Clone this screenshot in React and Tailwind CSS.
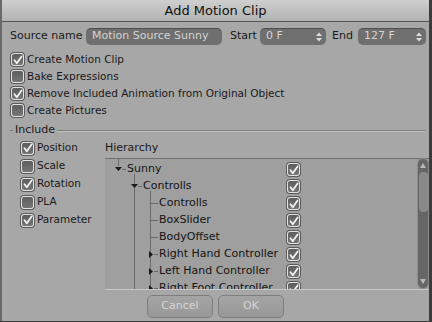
import React from 'react';

const font = { fontFamily: '"DejaVu Sans", "Liberation Sans", sans-serif' };

const Check = ({ on }) => (
  <span className="flex h-[13px] w-[13px] shrink-0 items-center justify-center rounded-[3px] border border-[#e2e2e2] bg-gradient-to-b from-[#5e5e5e] to-[#767676] shadow-[0_0_0_1px_#5a5a5a]">
    {on && (
      <svg width="10" height="10" viewBox="0 0 10 10">
        <path d="M1.5 5.2 L3.8 8.2 L8.6 1.4" stroke="#f2f2f2" strokeWidth="1.8" fill="none" strokeLinecap="round" strokeLinejoin="round" />
      </svg>
    )}
  </span>
);

const CheckRow = ({ on, label, h = 'h-[17px]' }) => (
  <div className={`flex ${h} items-center gap-[3px]`}>
    <Check on={on} />
    <span className="text-[10.5px] text-[#1a1a1a]">{label}</span>
  </div>
);

const Field = ({ value, w, spin }) => (
  <div className={`flex h-[17px] ${w} items-center justify-between rounded-[5px] border-t border-[#4e4e4e] bg-[#6f6f6f] pl-[6px] pr-[4px]`}>
    <span className="text-[11px] text-[#d4d4d4]">{value}</span>
    {spin && (
      <svg width="6" height="10" viewBox="0 0 6 10">
        <path d="M0 4 L3 0.5 L6 4 Z M0 6 L3 9.5 L6 6 Z" fill="#dcdcdc" />
      </svg>
    )}
  </div>
);

const TREE = [
  { name: 'Sunny', indent: 22 },
  { name: 'Controlls', indent: 38 },
  { name: 'Controlls', indent: 54 },
  { name: 'BoxSlider', indent: 54 },
  { name: 'BodyOffset', indent: 54 },
  { name: 'Right Hand Controller', indent: 54 },
  { name: 'Left Hand Controller', indent: 54 },
  { name: 'Right Foot Controller', indent: 54 },
];

const TreeLines = () => (
  <svg className="pointer-events-none absolute left-0 top-0" width="312" height="130">
    <g stroke="#6b6b6b" strokeWidth="1" fill="none">
      <path d="M13.5 0 V7" />
      <path d="M17 10.5 H21" />
      <path d="M29.5 15 V130" />
      <path d="M33 27.5 H37" />
      <path d="M45.5 32 V130" />
      <path d="M45.5 44.5 H53 M45.5 61.5 H53 M45.5 78.5 H53 M49 95.5 H53 M49 112.5 H53 M49 129.5 H53" />
    </g>
    <g fill="#1a1a1a">
      <path d="M10 8 L17 8 L13.5 12 Z" />
      <path d="M26 25 L33 25 L29.5 29 Z" />
      <path d="M44 92 L44 99 L48 95.5 Z M44 109 L44 116 L48 112.5 Z M44 126 L44 133 L48 129.5 Z" />
    </g>
  </svg>
);

export default function App() {
  return (
    <div style={font} className="relative h-[322px] w-[432px] overflow-hidden bg-[#3c3c3c]">
      <div className="flex h-[321px] w-[429px] flex-col border-l-2 border-[#6a6a6a] bg-[#a7a7a7]">
        <div className="flex h-[22px] shrink-0 items-center justify-center border-b border-[#555] bg-gradient-to-b from-[#cfcfcf] to-[#b2b2b2]">
          <span className="text-[13px] text-[#111]">Add Motion Clip</span>
        </div>

        <div className="flex flex-col pl-[8px] pt-[5px]">
          <div className="flex h-[18px] items-center">
            <span className="w-[76px] text-[11px] text-[#1a1a1a]">Source name</span>
            <Field value="Motion Source Sunny" w="w-[136px]" />
            <span className="ml-[8px] w-[30px] text-[11px] text-[#1a1a1a]">Start</span>
            <Field value="0 F" w="w-[66px]" spin />
            <span className="ml-[6px] w-[26px] text-[11px] text-[#1a1a1a]">End</span>
            <Field value="127 F" w="w-[68px]" spin />
          </div>

          <div className="mt-[6px] flex flex-col pl-[1px]">
            <CheckRow on label="Create Motion Clip" />
            <CheckRow label="Bake Expressions" />
            <CheckRow on label="Remove Included Animation from Original Object" />
            <CheckRow label="Create Pictures" />
          </div>

          <div className="mt-[2px] flex h-[18px] items-center pr-[4px]">
            <span className="h-px w-[3px] bg-[#7c7c7c]" />
            <span className="px-[2px] text-[11px] text-[#1a1a1a]">Include</span>
            <span className="h-px flex-1 bg-[#7c7c7c] shadow-[0_1px_0_#c4c4c4]" />
          </div>

          <div className="flex">
            <div className="flex w-[96px] flex-col pl-[11px]">
              <div className="flex flex-col">
                <CheckRow on label="Position" h="h-[18px]" />
                <CheckRow label="Scale" h="h-[18px]" />
                <CheckRow on label="Rotation" h="h-[18px]" />
                <CheckRow label="PLA" h="h-[18px]" />
                <CheckRow on label="Parameter" h="h-[18px]" />
              </div>
            </div>

            <div className="flex flex-col">
              <div className="flex h-[19px] items-center text-[11px] text-[#1a1a1a]">Hierarchy</div>
              <div className="relative flex h-[131px] w-[324px] border-t border-[#707070] bg-[#9f9f9f] shadow-[0_1px_0_#c8c8c8]">
                <div className="relative w-[312px] overflow-hidden">
                  <TreeLines />
                  <div className="flex flex-col pt-[2px]">
                    {TREE.map((r, i) => (
                      <div key={i} className="relative flex h-[17px] items-center">
                        <span style={{ paddingLeft: r.indent }} className="w-[182px] whitespace-nowrap text-[11px] text-[#141414]">{r.name}</span>
                        <Check on />
                      </div>
                    ))}
                  </div>
                </div>
                <div className="mt-[-1px] flex w-[12px] flex-col items-center rounded-[6px] border border-[#8c8c8c] bg-[#666]">
                  <svg width="8" height="8" viewBox="0 0 8 8" className="mt-[3px]">
                    <path d="M1 6 L4 1 L7 6 Z" fill="#b8b8b8" />
                  </svg>
                  <div className="mt-[2px] h-[40px] w-[9px] rounded-[4px] bg-[#8a8a8a]" />
                  <div className="flex-1" />
                  <svg width="8" height="8" viewBox="0 0 8 8" className="mb-[3px]">
                    <path d="M1 2 L4 7 L7 2 Z" fill="#b8b8b8" />
                  </svg>
                </div>
              </div>
            </div>
          </div>

          <div className="mt-[6px] flex justify-center gap-[5px] pr-[8px]">
            <button className="flex h-[23px] w-[66px] items-center justify-center rounded-[5px] border border-[#7e7e7e] bg-gradient-to-b from-[#a4a4a4] to-[#989898] text-[11px] text-[#d6d6d6]">Cancel</button>
            <button className="flex h-[23px] w-[66px] items-center justify-center rounded-[5px] border border-[#7e7e7e] bg-gradient-to-b from-[#a4a4a4] to-[#989898] text-[11px] text-[#d6d6d6]">OK</button>
          </div>
        </div>
      </div>
    </div>
  );
}
